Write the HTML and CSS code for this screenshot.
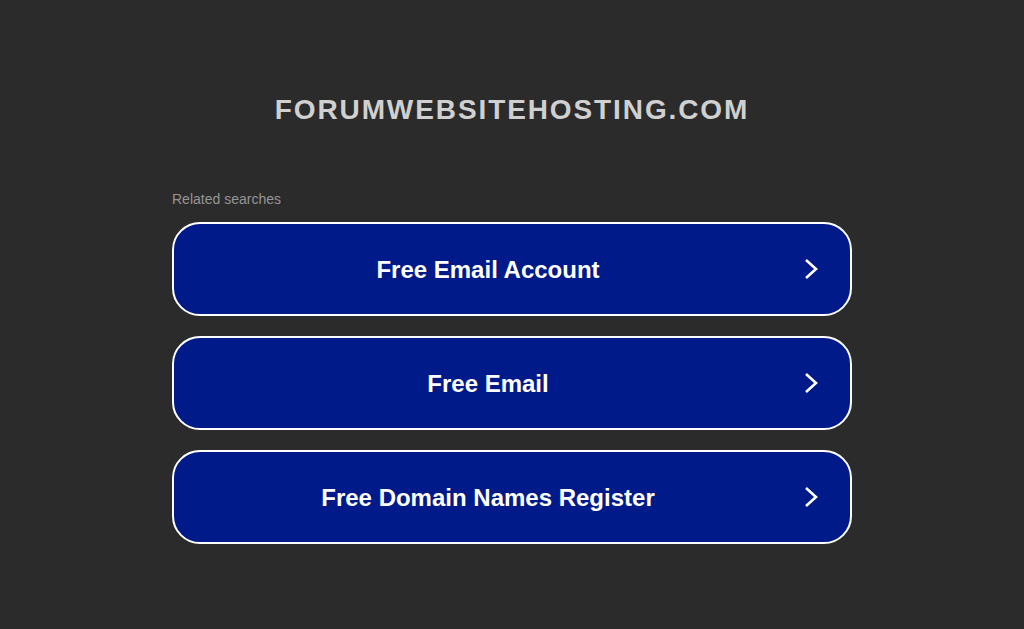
FILE: index.html
```html
<!DOCTYPE html>
<html lang="en">
  <head>
    <meta charset="UTF-8" />
    <title>forumwebsitehosting.com</title>
    <link rel="stylesheet" href="styles.css">
  </head>
  <body>
    <div class="page">
      <!-- Domain name header -->
      <h1 class="domain">forumwebsitehosting.com</h1>

      <div class="searches">
        <p class="searches-label">Related searches</p>

        <a class="search-link" href="#">
          <span class="search-text">Free Email Account</span>
          <svg class="chevron" width="14" height="22" viewBox="0 0 14 22"><path d="M2 2 L12 11 L2 20" /></svg>
        </a>
        <a class="search-link" href="#">
          <span class="search-text">Free Email</span>
          <svg class="chevron" width="14" height="22" viewBox="0 0 14 22"><path d="M2 2 L12 11 L2 20" /></svg>
        </a>
        <a class="search-link" href="#">
          <span class="search-text">Free Domain Names Register</span>
          <svg class="chevron" width="14" height="22" viewBox="0 0 14 22"><path d="M2 2 L12 11 L2 20" /></svg>
        </a>
      </div>
    </div>
  </body>
</html>
```

FILE: styles.css
```css
/* Dark parked-domain layout */
body {
  margin: 0;
  background-color: #2b2b2b;
  font-family: "Liberation Sans", Arial, sans-serif;
}

.page {
  padding-top: 93px;
}

.domain {
  margin: 0;
  text-align: center;
  text-transform: uppercase;
  font-size: 28px;
  line-height: 34px;
  font-weight: bold;
  letter-spacing: 1.9px;
  color: #d0d0d0;
}

.searches {
  width: 680px;
  margin: 64px auto 0;
}

.searches-label {
  margin: 0 0 15px;
  font-size: 14px;
  line-height: 16px;
  color: #959595;
}

.search-link {
  display: flex;
  align-items: center;
  height: 94px;
  box-sizing: border-box;
  margin-bottom: 20px;
  padding-right: 32px;
  background-color: #011a8a;
  border: 2px solid #fff;
  border-radius: 28px;
  text-decoration: none;
}

.search-text {
  flex: 1;
  padding-top: 2px;
  padding-right: 2px;
  text-align: center;
  font-size: 24px;
  font-weight: bold;
  color: #fff;
}

.chevron path {
  fill: none;
  stroke: #fff;
  stroke-width: 2.6;
}
```
